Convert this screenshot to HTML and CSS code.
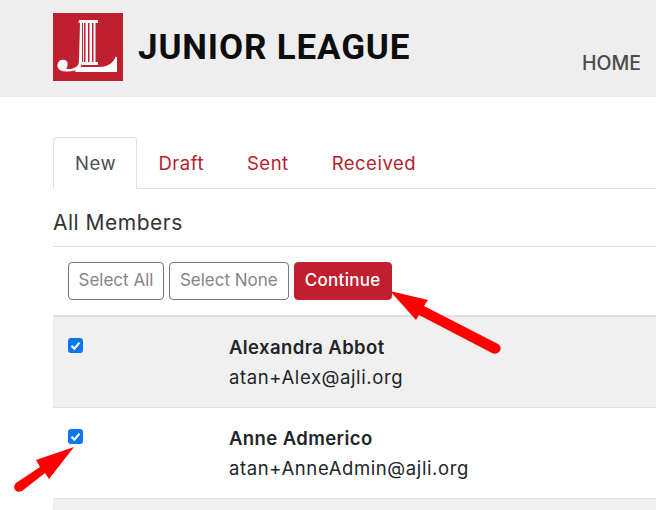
FILE: index.html
```html
<!DOCTYPE html>
<html lang="en">
<head>
    <meta charset="UTF-8">
    <title>Junior League</title>
    <link rel="stylesheet" href="styles.css">
</head>
<body>
    <header class="site-header">
        <svg class="logo" viewBox="0 0 70 68" aria-hidden="true">
            <rect width="70" height="68" fill="#c01f30"/>
            <path fill="#fff" d="M26 7h19v3h-2.500v39h2.500v3h-16v-3h1v-39h-4.500z"/>
            <path fill="#c01f30" d="M31 10h1.500v39h-1.500zM35 10h1.500v39h-1.500zM39 10h1.500v39h-1.500z"/>
            <path fill="#fff" d="M27 10h2v38q0 6-3.500 8t-9.500 2.500q-6 .5-9-1.500q-3-2-2.500-5.500q.5-3.500 3.500-4.500q3.500-1 5.500 1q2 2 1 5q-.5 1.500-1.500 2.500q3 1 6.500 0q4-1 5.500-3.500q1-2 1-5z"/>
            <path fill="#fff" d="M22 54h24q7 0 11-3q4-3 5.500-7h1.500v15h-42q1-2 .5-5z"/>
        </svg>
        <div class="wordmark">JUNIOR LEAGUE</div>
        <nav class="main-nav">HOME</nav>
    </header>

    <main class="content">
        <ul class="tabs">
            <li class="tab active">New</li>
            <li class="tab">Draft</li>
            <li class="tab">Sent</li>
            <li class="tab">Received</li>
        </ul>

        <h2 class="section-title">All Members</h2>

        <div class="toolbar">
            <button class="btn btn-outline">Select All</button>
            <button class="btn btn-outline">Select None</button>
            <button class="btn btn-primary">Continue</button>
        </div>

        <div class="members">
            <div class="member shaded">
                <div class="check-col"><span class="check"><svg viewBox="0 0 15 15"><path d="M3.500 7.800l2.800 2.800 5.200-6" fill="none" stroke="#fff" stroke-width="2.200"/></svg></span></div>
                <div>
                    <div class="member-name">Alexandra Abbot</div>
                    <div class="member-email">atan+Alex@ajli.org</div>
                </div>
            </div>
            <div class="member">
                <div class="check-col"><span class="check"><svg viewBox="0 0 15 15"><path d="M3.500 7.800l2.800 2.800 5.200-6" fill="none" stroke="#fff" stroke-width="2.200"/></svg></span></div>
                <div>
                    <div class="member-name">Anne Admerico</div>
                    <div class="member-email">atan+AnneAdmin@ajli.org</div>
                </div>
            </div>
            <div class="member shaded last"></div>
        </div>
    </main>

    <!-- annotation arrows drawn on top of the screenshot -->
    <svg class="arrows" viewBox="0 0 656 510" aria-hidden="true">
        <path fill="#f00" d="M390 291L428 300L424 306L498 344Q502 347 500 351Q497 355 492 353L419 315L416 320Z"/>
        <path fill="#f00" d="M74 447L49 479L45 473L22 491Q17 493 15 490Q13 486 16 483L40 467L36 460Z"/>
    </svg>
</body>
</html>
```

FILE: styles.css
```css
* {
    margin: 0;
    padding: 0;
    box-sizing: border-box;
}

html, body {
    height: 100%;
    overflow: hidden;
}

body {
    position: relative;
    font-family: 'Inter', sans-serif;
    color: #212529;
    background: #fff;
}

.site-header {
    display: flex;
    height: 97px;
    padding: 13px 0 0 53px;
    background: #eee;
}

.logo {
    width: 70px;
    height: 68px;
    flex-shrink: 0;
}

.wordmark {
    width: 273px;
    margin: 15px 0 0 15px;
    font-family: 'Roboto', sans-serif;
    font-size: 35px;
    font-weight: 700;
    line-height: 40px;
    letter-spacing: .85px;
    color: #0d0d0d;
    white-space: nowrap;
}

.main-nav {
    margin: 38px 0 0 171px;
    font-size: 19.5px;
    font-weight: 500;
    line-height: 24px;
    color: #4a4a4a;
}

.content {
    padding: 40px 0 0 53px;
}

.tabs {
    display: flex;
    height: 52px;
    list-style: none;
    border-bottom: 1px solid #dee2e6;
}

.tab {
    height: 52px;
    padding: 14px 21.500px 0;
    font-size: 18.500px;
    line-height: 24px;
    letter-spacing: .5px;
    color: #b81c2e;
}

.tab.active {
    width: 84px;
    padding: 13px 21px 0;
    color: #495057;
    background: #fff;
    border: 1px solid #dee2e6;
    border-bottom-color: #fff;
    border-radius: 4px 4px 0 0;
}

.section-title {
    height: 58px;
    padding-top: 20px;
    font-size: 21px;
    font-weight: 400;
    line-height: 28px;
    letter-spacing: .5px;
    color: #333;
    border-bottom: 1px solid #dee2e6;
}

.toolbar {
    display: flex;
    gap: 5px;
    padding: 15px 0 15px 15px;
}

.btn {
    height: 38px;
    padding: 0 10px 2px;
    font-family: inherit;
    font-size: 17px;
    border-radius: 4px;
}

.btn-outline {
    color: #868686;
    background: #fff;
    border: 1px solid #777;
}

.btn-outline:first-child {
    padding: 0 9.500px 2px;
}

.btn-primary {
    font-weight: 500;
    letter-spacing: .3px;
    color: #fff;
    background: #c01f30;
    border: 1px solid #c01f30;
}

.member {
    display: flex;
    height: 91px;
    padding: 21px 0 0 15px;
    border-top: 1px solid #dee2e6;
}

.member.shaded {
    background: #f0f0f0;
}

.member:first-child {
    height: 92px;
    border-top: 2px solid #dee2e6;
}

.member.last {
    height: 12px;
    padding: 0;
}

.check-col {
    width: 161px;
}

.check {
    display: block;
    width: 15px;
    height: 15px;
    background: #0b76ef;
    border-radius: 3px;
}

.check svg {
    display: block;
}

.member-name {
    margin-top: -3px;
    font-size: 18.500px;
    font-weight: 600;
    line-height: 24px;
    letter-spacing: .4px;
}

.member-email {
    margin-top: 6px;
    font-size: 18.500px;
    line-height: 24px;
    letter-spacing: .6px;
}

.arrows {
    position: absolute;
    top: 0;
    left: 0;
    width: 656px;
    height: 510px;
}
```
